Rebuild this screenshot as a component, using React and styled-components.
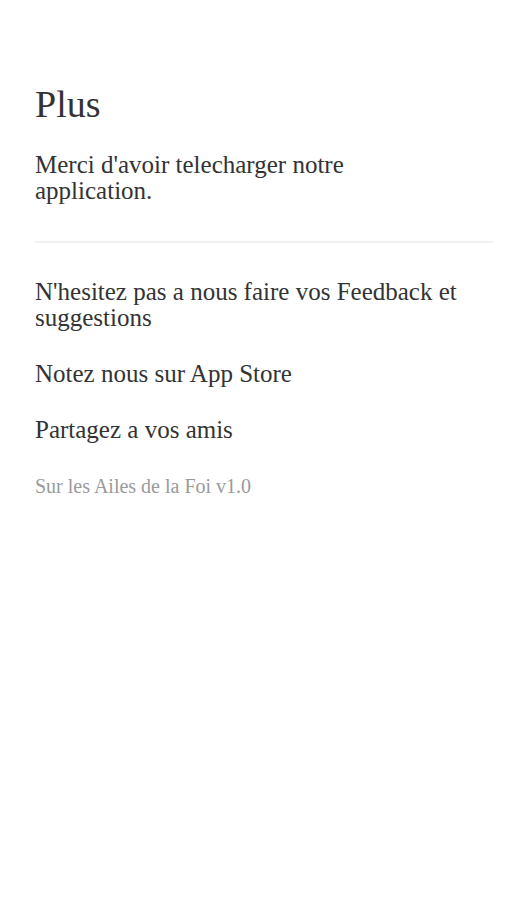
import React from 'react'
import styled, { createGlobalStyle } from 'styled-components';

const GlobalStyle = createGlobalStyle`
body {
    margin: 0;
    background: #ffffff;
    font-family: "Liberation Serif", "DejaVu Serif", serif;
}
`

const Page = styled.div`
padding: 82px 14px 40px 35px;
color: #333333;
`

const Title = styled.h1`
margin: 0;
font-size: 38px;
font-weight: 400;
line-height: 44px;
`

const Intro = styled.p`
margin: 26px 0 0;
max-width: 360px;
font-size: 25px;
line-height: 26px;
`

const Divider = styled.hr`
margin: 37px 0 36px;
border: none;
height: 2px;
background: #f1f1f1;
`

const Menu = styled.ul`
list-style: none;
margin: 0;
padding: 0;
display: flex;
flex-direction: column;
gap: 30px;
`

const MenuItem = styled.li`
font-size: 25px;
line-height: 26px;
cursor: pointer;
`

const Version = styled.p`
margin: 31px 0 0;
font-size: 20px;
line-height: 24px;
color: #9a9a9a;
`

const items = [
    "N'hesitez pas a nous faire vos Feedback et suggestions",
    'Notez nous sur App Store',
    'Partagez a vos amis',
]

function App() {
    return (
        <>
            <GlobalStyle />
            <Page>
                <Title>Plus</Title>
                <Intro>Merci d'avoir telecharger notre application.</Intro>
                <Divider />
                <Menu>
                    {items.map((item) => (
                        <MenuItem key={item}>{item}</MenuItem>
                    ))}
                </Menu>
                <Version>Sur les Ailes de la Foi v1.0</Version>
            </Page>
        </>
    )
}

export default App;
